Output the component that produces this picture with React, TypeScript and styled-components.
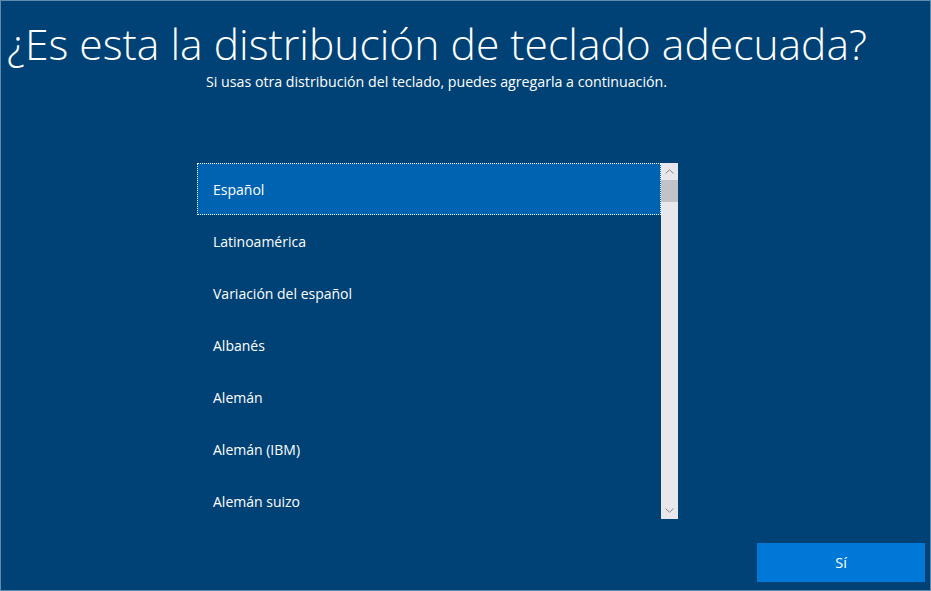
import React from "react";
import styled, { createGlobalStyle } from "styled-components";

const Global = createGlobalStyle`
  html, body { margin: 0; padding: 0; width: 931px; height: 591px; overflow: hidden; }
  body { background: #004275; font-family: "Open Sans", "Noto Sans", sans-serif; }
`;

const Frame = styled.div`
  box-sizing: border-box;
  width: 931px;
  height: 591px;
  border: 1px solid #5f8bb0;
  background: #004275;
  color: #ffffff;
  display: flex;
  flex-direction: column;
`;

const Title = styled.h1`
  margin: 0;
  padding: 14px 0 0 6px;
  font-weight: 300;
  font-size: 42.6px;
  line-height: 56px;
  white-space: nowrap;
`;

const Subtitle = styled.p`
  margin: 0;
  text-align: center;
  font-size: 14.2px;
  line-height: 22px;
  padding-right: 58px;
`;

const ListArea = styled.div`
  margin: 70px 0 0 196px;
  display: flex;
  height: 356px;
  width: 481px;
`;

const Items = styled.ul`
  list-style: none;
  margin: 0;
  padding: 0;
  flex: 1;
  overflow: hidden;
`;

const Item = styled.li<{ $selected?: boolean }>`
  box-sizing: border-box;
  height: 52px;
  display: flex;
  align-items: center;
  padding-left: 16px;
  font-size: 14px;
  background: ${(p) => (p.$selected ? "#0063b1" : "transparent")};
  outline: ${(p) => (p.$selected ? "1px dotted #ffffff" : "none")};
  outline-offset: -1px;
`;

const Scrollbar = styled.div`
  width: 17px;
  background: #e8e8ec;
  display: flex;
  flex-direction: column;
`;

const Arrow = styled.div`
  height: 17px;
  display: flex;
  align-items: center;
  justify-content: center;
`;

const Track = styled.div`
  flex: 1;
`;

const Thumb = styled.div`
  height: 22px;
  background: #c2c3c9;
`;

const Footer = styled.div`
  margin-top: auto;
  display: flex;
  justify-content: flex-end;
  padding: 0 5px 8px 0;
`;

const Button = styled.button`
  width: 168px;
  height: 39px;
  border: none;
  background: #0078d7;
  color: #ffffff;
  font-family: "Open Sans", "Noto Sans", sans-serif;
  font-size: 14.5px;
  cursor: pointer;
`;

const Chevron = ({ up }: { up?: boolean }) => (
  <svg width="9" height="5" viewBox="0 0 9 5">
    <path
      d={up ? "M0.5 4.5 L4.5 0.8 L8.5 4.5" : "M0.5 0.5 L4.5 4.2 L8.5 0.5"}
      fill="none"
      stroke="#86868b"
      strokeWidth="1"
    />
  </svg>
);

const layouts = [
  "Español",
  "Latinoamérica",
  "Variación del español",
  "Albanés",
  "Alemán",
  "Alemán (IBM)",
  "Alemán suizo",
];

export default function App() {
  return (
    <>
      <Global />
      <Frame>
        <Title>¿Es esta la distribución de teclado adecuada?</Title>
        <Subtitle>Si usas otra distribución del teclado, puedes agregarla a continuación.</Subtitle>
        <ListArea>
          <Items>
            {layouts.map((l, i) => (
              <Item key={l} $selected={i === 0}>
                {l}
              </Item>
            ))}
          </Items>
          <Scrollbar>
            <Arrow>
              <Chevron up />
            </Arrow>
            <Track>
              <Thumb />
            </Track>
            <Arrow>
              <Chevron />
            </Arrow>
          </Scrollbar>
        </ListArea>
        <Footer>
          <Button>Sí</Button>
        </Footer>
      </Frame>
    </>
  );
}
